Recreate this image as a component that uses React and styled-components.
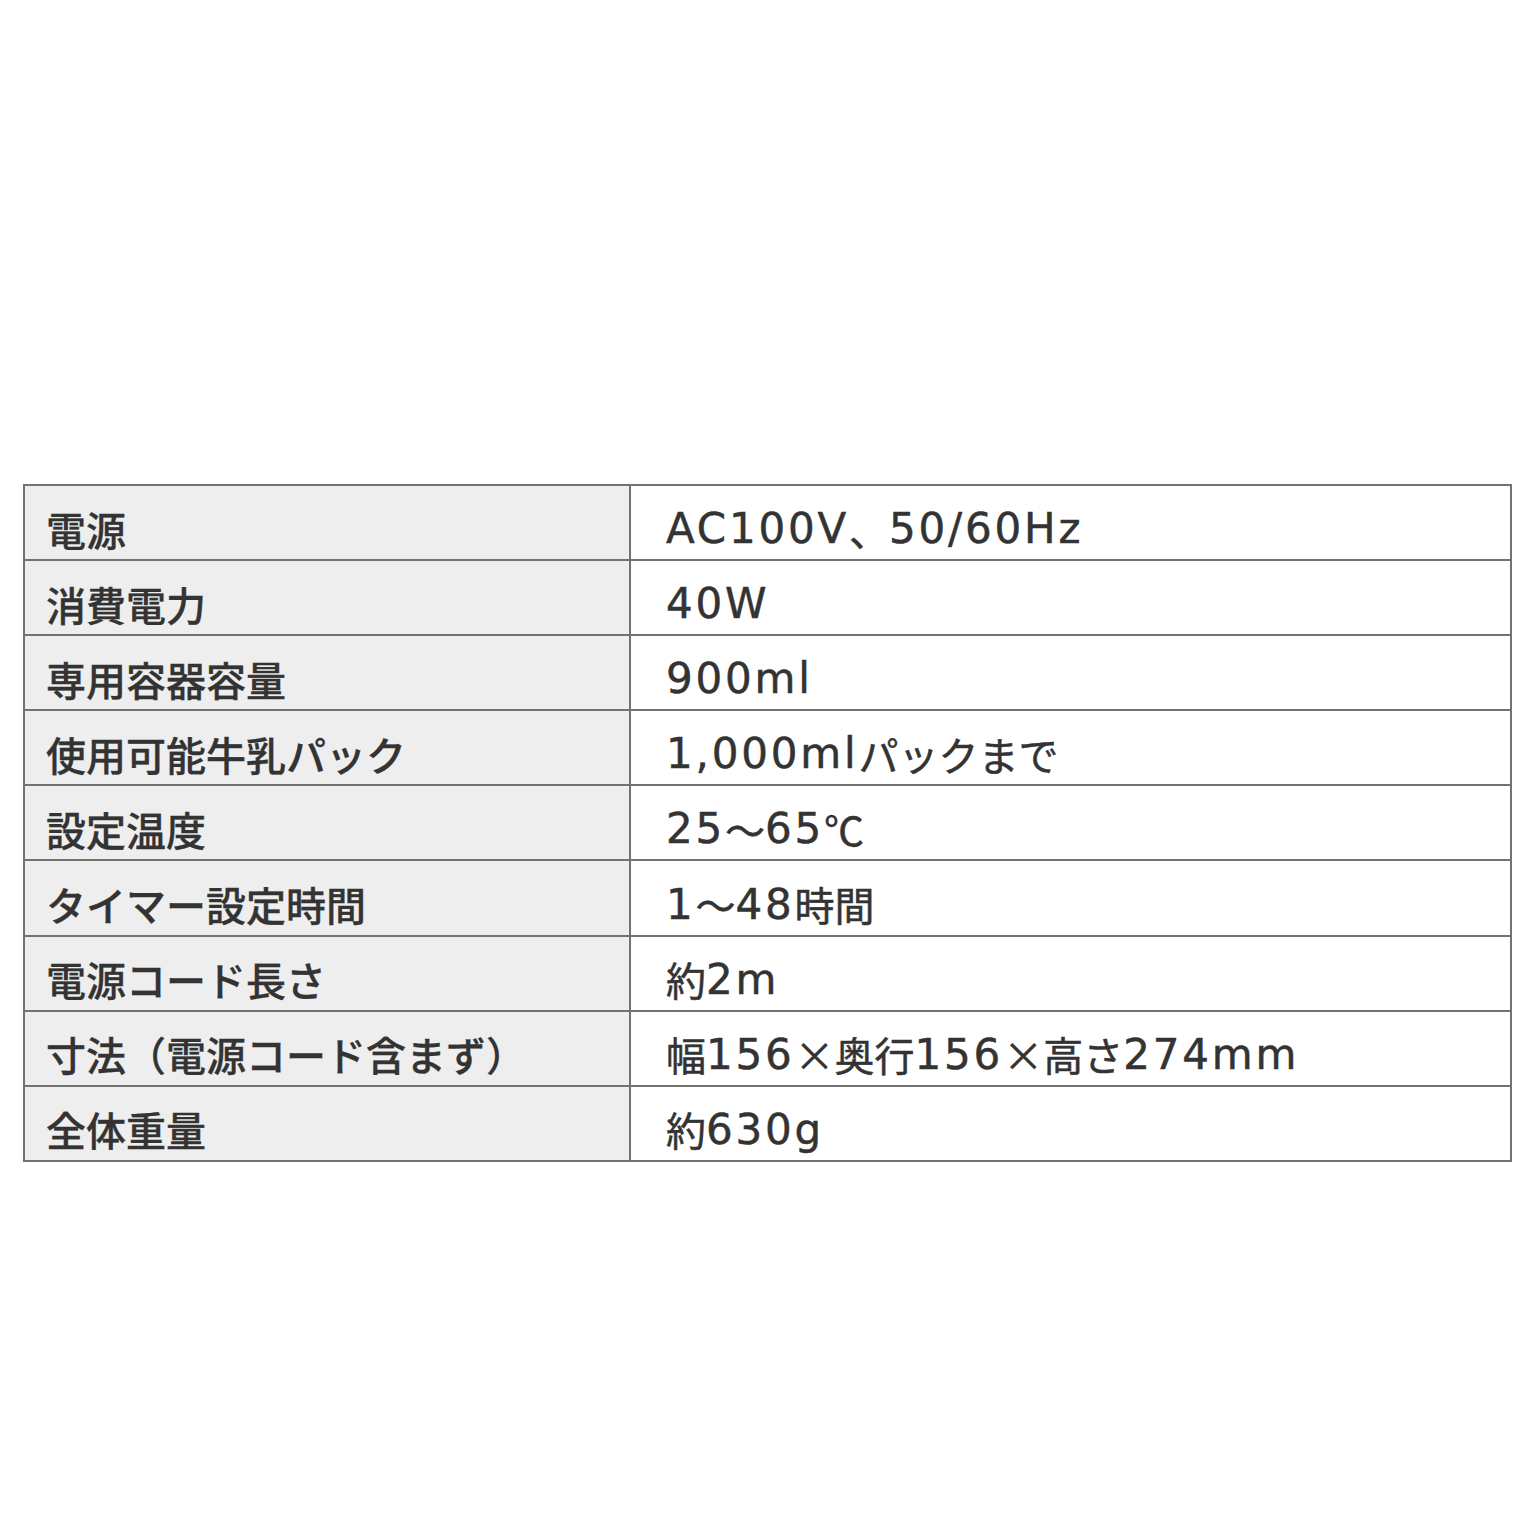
import { createGlobalStyle, styled } from "styled-components";

const specs = [
  ["電源", "AC100V、50/60Hz"],
  ["消費電力", "40W"],
  ["専用容器容量", "900ml"],
  ["使用可能牛乳パック", "1,000mlパックまで"],
  ["設定温度", "25～65℃"],
  ["タイマー設定時間", "1～48時間"],
  ["電源コード長さ", "約2m"],
  ["寸法（電源コード含まず）", "幅156×奥行156×高さ274mm"],
  ["全体重量", "約630g"],
];

const CJK = /([\u2103\u3000-\u30ff\u4e00-\u9fff\uff00-\uffef×]+)/;

// splits a value into latin / cjk runs so each gets its own font
function Mixed({ text }) {
  return text
    .split(CJK)
    .filter((s) => s !== "")
    .map((part, i) =>
      CJK.test(part) ? (
        <Run key={i} $cjk>
          {part}
        </Run>
      ) : (
        <Run key={i}>{part}</Run>
      )
    );
}

function App() {
  return (
    <>
      <GlobalStyle />
      <Page>
        <SpecTable>
          {specs.map(([label, value], i) => (
            <Row key={label} $last={i === specs.length - 1}>
              <Label>{label}</Label>
              <Value>
                <Mixed text={value} />
              </Value>
            </Row>
          ))}
        </SpecTable>
      </Page>
    </>
  );
}

const GlobalStyle = createGlobalStyle`
  html, body {
    margin: 0;
    padding: 0;
    background: #fff;
  }
  body {
    font-family: "Noto Sans CJK JP", sans-serif;
    color: #333;
  }
`;

const Page = styled.div`
  width: 1536px;
  height: 1536px;
  box-sizing: border-box;
  padding: 484px 24px 0 23px;
  background: #fff;
`;

const SpecTable = styled.div`
  display: flex;
  flex-direction: column;
  border: 2px solid #727272;
`;

const Row = styled.div`
  display: grid;
  grid-template-columns: 606px 1fr;
  height: 73.1px;
  border-bottom: ${(p) => (p.$last ? "none" : "2px solid #727272")};
`;

const Cell = styled.div`
  display: flex;
  align-items: center;
  box-sizing: border-box;
  padding-top: 12px;
  white-space: nowrap;
  color: #333;
`;

const Label = styled(Cell)`
  background: #eeeeee;
  border-right: 2px solid #727272;
  padding-left: 21px;
  font-family: "Noto Sans CJK JP", sans-serif;
  font-size: 40px;
  font-weight: 500;
  -webkit-text-stroke: 0.3px #333;
`;

const Value = styled(Cell)`
  background: #fff;
  padding-left: 35px;
  font-size: 40px;
  -webkit-text-stroke: 0.5px #333;
`;

const Run = styled.span`
  font-family: ${(p) =>
    p.$cjk ? '"Noto Sans CJK JP", sans-serif' : '"DejaVu Sans", "Noto Sans CJK JP", sans-serif'};
  font-size: ${(p) => (p.$cjk ? "40px" : "42px")};
  letter-spacing: ${(p) => (p.$cjk ? "0" : "2.8px")};
  font-weight: 400;
`;

export default App;
